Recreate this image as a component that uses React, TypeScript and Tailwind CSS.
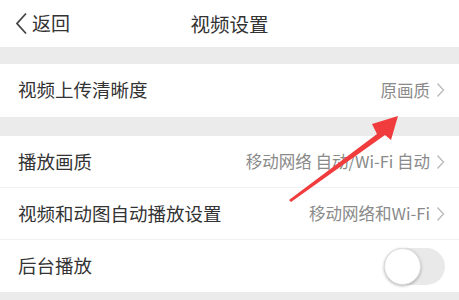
import React from "react";

const Chevron = () => (
  <svg width="9" height="16" viewBox="0 0 9 16" className="ml-[6px] shrink-0">
    <path d="M1.5 1.5 L7.5 8 L1.5 14.5" fill="none" stroke="#b8b8b8" strokeWidth="1.3" />
  </svg>
);

const Row = ({ label, value, last, children }: { label: string; value?: string; last?: boolean; children?: React.ReactNode }) => (
  <div className={`flex items-center justify-between h-[52px] pl-[18px] pr-[14px] ${last ? "" : "border-b border-[#f1f1f1]"}`}>
    <span className="text-[18.5px] text-[#333333]">{label}</span>
    {value !== undefined && (
      <span className="flex items-center text-[16.5px] text-[#8a8a8a]">
        {value}
        <Chevron />
      </span>
    )}
    {children}
  </div>
);

export default function App() {
  return (
    <div
      className="relative w-[459px] h-[300px] overflow-hidden bg-[#ebebeb]"
      style={{ fontFamily: '"Noto Sans CJK SC", "Noto Sans", sans-serif' }}
    >
      <div className="relative flex items-center h-[47px] bg-white">
        <div className="flex items-center pl-[15px]">
          <svg width="13" height="23" viewBox="0 0 13 23">
            <path d="M11 1.5 L2 11.5 L11 21.5" fill="none" stroke="#444" strokeWidth="1.8" />
          </svg>
          <span className="ml-[4px] text-[19px] text-[#333333]">返回</span>
        </div>
        <div className="absolute left-0 right-0 top-0 h-[47px] flex items-center justify-center pointer-events-none">
          <span className="text-[19.5px] text-[#333333]">视频设置</span>
        </div>
      </div>
      <div className="h-[17px]" />
      <div className="bg-white h-[53px] flex flex-col">
        <Row label="视频上传清晰度" value="原画质" last />
      </div>
      <div className="h-[19px]" />
      <div className="bg-white">
        <Row label="播放画质" value="移动网络 自动/Wi-Fi 自动" />
        <Row label="视频和动图自动播放设置" value="移动网络和Wi-Fi" />
        <Row label="后台播放" last>
          <div className="relative w-[61px] h-[37px] rounded-full bg-[#e9e9e9]">
            <div className="absolute left-0 top-0 w-[37px] h-[37px] rounded-full bg-white shadow-[0_1px_3px_rgba(0,0,0,0.3)] border border-[#dddddd]" />
          </div>
        </Row>
      </div>
      <svg className="absolute left-0 top-0 pointer-events-none" width="459" height="300" viewBox="0 0 459 300">
        <polygon
          points="289,200 377,134 372,124 398,116 391,140 385,135 291,202"
          fill="#f03c3c"
        />
      </svg>
    </div>
  );
}
